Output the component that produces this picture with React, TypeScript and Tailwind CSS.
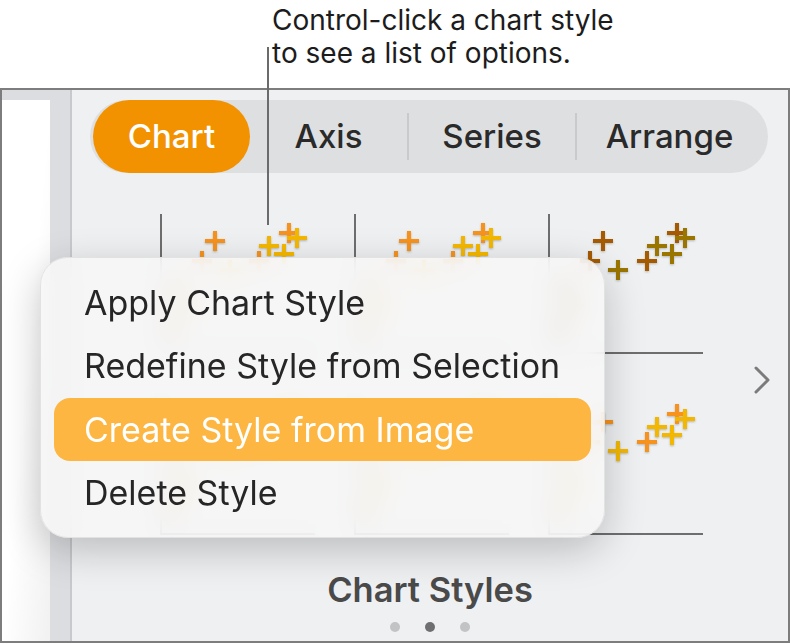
import React from 'react';

type Pt = { x: number; y: number; warm: boolean };

// scatter pattern shared by every thumbnail, coords inside a 155x140 box
const points: Pt[] = [
  { x: 14, y: 112, warm: true },
  { x: 26, y: 92, warm: false },
  { x: 18, y: 74, warm: true },
  { x: 42, y: 47, warm: true },
  { x: 55, y: 27, warm: true },
  { x: 70, y: 56, warm: false },
  { x: 99, y: 47, warm: true },
  { x: 109, y: 32, warm: false },
  { x: 124, y: 40, warm: false },
  { x: 129, y: 19, warm: true },
  { x: 137, y: 24, warm: false },
];

const palettes = {
  sunny: { warm: '#f7921a', cool: '#f4b704' },
  earth: { warm: '#a65a02', cool: '#9a7402' },
};

function Thumbnail({ palette }: { palette: keyof typeof palettes }) {
  const colors = palettes[palette];
  return (
    <div className="relative h-[140px] w-[155px] border-b-2 border-l-2 border-[#6e6e6e]">
      <svg width="155" height="140" viewBox="0 0 155 140" className="absolute -left-[2px] top-0 overflow-visible">
        <defs>
          <filter id={`sh-${palette}`} x="-50%" y="-50%" width="200%" height="200%">
            <feDropShadow dx="0" dy="1" stdDeviation="0.8" floodColor="#000" floodOpacity="0.25" />
          </filter>
        </defs>
        <g filter={`url(#sh-${palette})`} strokeWidth="4" fill="none">
          {points.map((p, i) => (
            <path
              key={i}
              d={`M${p.x - 10} ${p.y}H${p.x + 10}M${p.x} ${p.y - 10}V${p.y + 10}`}
              stroke={p.warm ? colors.warm : colors.cool}
            />
          ))}
        </g>
      </svg>
    </div>
  );
}

function Segmented() {
  return (
    <div className="ml-[18px] mr-[20px] mt-[10px] flex h-[73px] items-center rounded-full bg-[#dedfe1] text-[33px] font-medium text-[#2a2a2a]">
      <div className="ml-[3px] flex h-[73px] w-[157px] items-center justify-center rounded-full bg-[#f39200] text-white">
        Chart
      </div>
      <div className="flex w-[157px] justify-center">Axis</div>
      <div className="h-[47px] w-[2px] bg-[#c9cacc]" />
      <div className="flex w-[166px] justify-center">Series</div>
      <div className="h-[47px] w-[2px] bg-[#c9cacc]" />
      <div className="flex flex-1 justify-center pr-[6px]">Arrange</div>
    </div>
  );
}

const menuItems = ['Apply Chart Style', 'Redefine Style from Selection', 'Create Style from Image', 'Delete Style'];

function ContextMenu() {
  return (
    <div className="absolute left-[40px] top-[257px] flex h-[281px] w-[565px] flex-col rounded-[28px] border border-[#e2e2e2] bg-[#f7f7f7]/85 px-[13px] py-[13px] shadow-[0_12px_40px_rgba(0,0,0,0.22)] backdrop-blur-md">
      {menuItems.map((label, i) => (
        <div
          key={label}
          className={`flex h-[63.5px] items-center rounded-[16px] pl-[30px] text-[34px] ${
            i === 2 ? 'bg-[#fcb641] text-white' : 'text-[#262626]'
          }`}
        >
          {label}
        </div>
      ))}
    </div>
  );
}

export default function App() {
  return (
    <div className="relative h-[644px] w-[790px] overflow-hidden bg-white font-['Inter',sans-serif]">
      {/* callout */}
      <div className="h-[88px] pl-[272px] pt-[4px] text-[28px] leading-[33px] text-[#1c1c1c]">
        <div>Control-click a chart style</div>
        <div>to see a list of options.</div>
      </div>

      {/* window frame */}
      <div className="flex h-[555px] border-2 border-[#7d7d7d]">
        <div className="flex w-[68px] bg-[#dcdde0] pt-[10px]">
          <div className="w-[48px] bg-gradient-to-br from-white via-white to-[#f1f1f1]" />
          <div className="flex-1" />
        </div>
        <div className="w-[2px] bg-[#c8c9cc]" />

        <div className="flex flex-1 flex-col bg-[#eff0f2]">
          <Segmented />

          <div className="mt-[41px] flex items-center">
            <div className="ml-[88px] grid grid-cols-[155px_155px_155px] gap-x-[39px] gap-y-[41px]">
              <Thumbnail palette="sunny" />
              <Thumbnail palette="sunny" />
              <Thumbnail palette="earth" />
              <Thumbnail palette="sunny" />
              <Thumbnail palette="sunny" />
              <Thumbnail palette="sunny" />
            </div>
            <svg width="18" height="30" viewBox="0 0 18 30" className="ml-[50px] mt-[10px]">
              <path d="M3 3L15 15L3 27" stroke="#7b7b7b" strokeWidth="3" fill="none" strokeLinecap="round" strokeLinejoin="round" />
            </svg>
          </div>

          <div className="mt-[35px] text-center text-[34.5px] font-semibold leading-[40px] text-[#4a4a4a]">Chart Styles</div>
          <div className="mt-[12px] flex justify-center gap-[25px]">
            <div className="h-[10px] w-[10px] rounded-full bg-[#c2c3c5]" />
            <div className="h-[10px] w-[10px] rounded-full bg-[#6f6f71]" />
            <div className="h-[10px] w-[10px] rounded-full bg-[#c2c3c5]" />
          </div>
        </div>
      </div>

      <ContextMenu />

      {/* leader line */}
      <div className="absolute left-[267px] top-[47px] h-[178px] w-[2px] bg-[#6b6b6b]" />
    </div>
  );
}
